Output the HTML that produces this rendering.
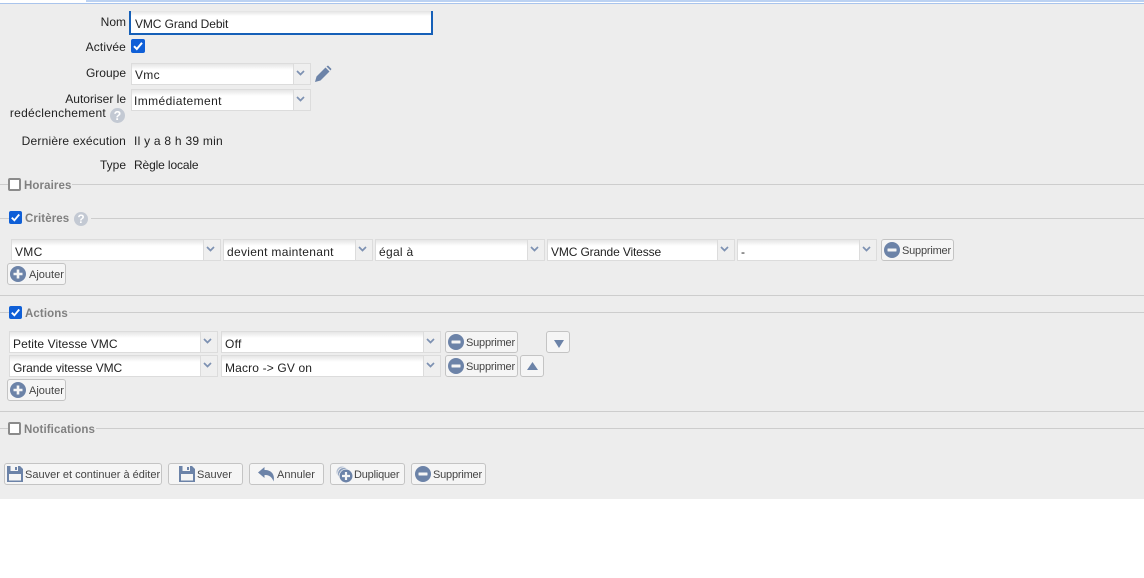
<!DOCTYPE html>
<html><head><meta charset="utf-8"><style>
html,body{margin:0;padding:0;background:#fff}
#p{position:relative;width:1144px;height:578px;overflow:hidden;background:#fff;font:12px "Liberation Sans",sans-serif;color:#222}
#bg{position:absolute;left:0;top:4px;width:1144px;height:495px;background:#ededed}
.a,.l,.v,.s,.b,.hr,.cb,.lg{position:absolute}
.l{right:1018px;text-align:right;white-space:nowrap;line-height:14px}
.v{left:134px;white-space:nowrap;letter-spacing:.2px;line-height:14px}
.s{box-sizing:border-box;height:22px;border:1px solid #dcdcdc;background:linear-gradient(#e6e6e6,#fff 6px);line-height:22px;padding-left:3px;white-space:nowrap;letter-spacing:.3px;color:#222}
.d{padding-top:1px}
.s:after{content:"";position:absolute;right:0;top:0;width:16px;height:20px;background:#efefef;border-left:1px solid #dcdcdc}
.s svg{position:absolute;right:4px;top:4px;z-index:1}
.b{box-sizing:border-box;height:22px;border:1px solid #c4c4c4;border-radius:3px;background:#f5f5f5;font-size:11px;line-height:22px;color:#444;white-space:nowrap}
.b svg{position:absolute;left:2px;top:2px}
.b span{position:absolute;top:0}
.n{letter-spacing:-.2px}
.hr{height:1px;background:#cdcdcd}
.cb{box-sizing:border-box;width:13px;height:13px;border-radius:2px}
.on{background:#0f5fd7}
.on svg{position:absolute;left:0;top:0}
.off{border:2px solid #8b8b8b;background:#fff}
.lg{font-weight:bold;font-size:11.5px;color:#808080;line-height:14px;letter-spacing:.1px;white-space:nowrap}
</style></head><body><div id="p">
<svg width="0" height="0" style="position:absolute"><defs>
<symbol id="ar" viewBox="0 0 11 10"><path d="M2 3L5.5 6.5L9 3" fill="none" stroke="#7d91b2" stroke-width="1.7"/></symbol>
<symbol id="ck" viewBox="0 0 14 14"><path d="M3 7.2L5.8 10L11 3.8" fill="none" stroke="#fff" stroke-width="2"/></symbol>
<symbol id="mi" viewBox="0 0 16 16"><circle cx="8" cy="8" r="8" fill="#6c83a8"/><rect x="3.5" y="6.5" width="9" height="3" rx=".5" fill="#f5f5f5"/></symbol>
<symbol id="pl" viewBox="0 0 16 16"><circle cx="8" cy="8" r="8" fill="#6c83a8"/><path d="M8 3.5v9M3.5 8h9" stroke="#f5f5f5" stroke-width="2.6"/></symbol>
<symbol id="sv" viewBox="0 0 16 16"><path d="M0 0h13l3 3v13H0z" fill="#6c83a8"/><rect x="3.5" y="0" width="7.5" height="5" fill="#f5f5f5"/><rect x="8" y="1" width="2" height="3" fill="#6c83a8"/><rect x="2" y="8" width="12" height="6.5" fill="#f5f5f5"/></symbol>
<symbol id="he" viewBox="0 0 15 15"><circle cx="7.5" cy="7.5" r="7.5" fill="#c3c9d3"/><text x="7.5" y="12" text-anchor="middle" font-family="Liberation Sans" font-weight="bold" font-size="12.5" fill="#fff">?</text></symbol>
</defs></svg>
<div id="bg"></div>
<div class="a" style="left:86px;top:0;width:1058px;height:2px;background:#bcd2f2"></div>
<div class="a" style="left:0;top:3px;width:1144px;height:1px;background:#a9c4ec"></div>

<div class="l" style="top:15px">Nom</div>
<div class="a" style="box-sizing:border-box;left:129px;top:11px;width:304px;height:24px;background:linear-gradient(#e2e2e2,#fff 5px);border:2px solid #1660b8;border-top:0;line-height:24px;padding-left:4px;padding-top:1px;letter-spacing:-.1px">VMC Grand Debit</div>

<div class="l" style="top:40px;letter-spacing:.15px">Activée</div>
<div class="cb on" style="left:131px;top:39px;width:14px;height:14px"><svg width="14" height="14"><use href="#ck"/></svg></div>

<div class="l" style="top:66px">Groupe</div>
<div class="s" style="left:131px;top:63px;width:180px"><svg width="11" height="10"><use href="#ar"/></svg>Vmc</div>
<svg class="a" style="left:314px;top:65px" width="18" height="18" viewBox="0 0 18 18"><path d="M1 17L2.5 11.5L11.5 2.5L15.5 6.5L6.5 15.5Z" fill="#6c83a8"/><path d="M12.5 1.5L14 0.5L17.5 4L16.5 5.5Z" fill="#6c83a8"/></svg>

<div class="l" style="top:92px">Autoriser le</div>
<div class="s" style="left:131px;top:89px;width:180px;padding-left:2px;letter-spacing:.4px"><svg width="11" height="10"><use href="#ar"/></svg>Immédiatement</div>
<div class="l" style="top:106px;right:1038px;letter-spacing:.27px">redéclenchement</div>
<svg class="a" style="left:110px;top:108px" width="15" height="15"><use href="#he"/></svg>

<div class="l" style="top:134px;letter-spacing:.2px">Dernière exécution</div>
<div class="v" style="top:134px;letter-spacing:.25px">Il y a 8 h 39 min</div>
<div class="l" style="top:158px">Type</div>
<div class="v" style="top:158px;letter-spacing:-.13px">Règle locale</div>

<div class="hr" style="left:0;top:184px;width:8px"></div>
<div class="hr" style="left:72px;top:184px;width:1072px"></div>
<div class="cb off" style="left:8px;top:178px"></div>
<div class="lg" style="left:24px;top:179px">Horaires</div>

<div class="hr" style="left:0;top:218px;width:9px"></div>
<div class="hr" style="left:91px;top:218px;width:1053px"></div>
<div class="cb on" style="left:9px;top:211px"><svg width="13" height="13"><use href="#ck"/></svg></div>
<div class="lg" style="left:25px;top:212px">Critères</div>
<svg class="a" style="left:74px;top:212px" width="14" height="14"><use href="#he"/></svg>

<div class="s d" style="left:11px;top:239px;width:210px"><svg width="11" height="10"><use href="#ar"/></svg>VMC</div>
<div class="s d" style="left:223px;top:239px;width:150px"><svg width="11" height="10"><use href="#ar"/></svg>devient maintenant</div>
<div class="s d" style="left:375px;top:239px;width:170px"><svg width="11" height="10"><use href="#ar"/></svg>égal à</div>
<div class="s d" style="left:547px;top:239px;width:188px;letter-spacing:-.14px"><svg width="11" height="10"><use href="#ar"/></svg>VMC Grande Vitesse</div>
<div class="s d" style="left:737px;top:239px;width:140px"><svg width="11" height="10"><use href="#ar"/></svg>-</div>
<div class="b" style="left:881px;top:239px;width:73px"><svg width="16" height="16"><use href="#mi"/></svg><span class="n" style="left:20px">Supprimer</span></div>
<div class="b" style="left:7px;top:263px;width:59px"><svg width="16" height="16"><use href="#pl"/></svg><span style="left:21px">Ajouter</span></div>

<div class="hr" style="left:0;top:295px;width:1144px"></div>
<div class="hr" style="left:0;top:312px;width:9px"></div>
<div class="hr" style="left:69px;top:312px;width:1075px"></div>
<div class="cb on" style="left:9px;top:306px"><svg width="13" height="13"><use href="#ck"/></svg></div>
<div class="lg" style="left:25px;top:307px">Actions</div>

<div class="s d" style="left:9px;top:331px;width:209px;letter-spacing:.08px"><svg width="11" height="10"><use href="#ar"/></svg>Petite Vitesse VMC</div>
<div class="s d" style="left:221px;top:331px;width:220px"><svg width="11" height="10"><use href="#ar"/></svg>Off</div>
<div class="b" style="left:445px;top:331px;width:73px"><svg width="16" height="16"><use href="#mi"/></svg><span class="n" style="left:20px">Supprimer</span></div>
<div class="b" style="left:546px;top:331px;width:24px"><svg style="left:7px;top:8px" width="10" height="8"><path d="M0 0h10L5 8z" fill="#6c83a8"/></svg></div>
<div class="s d" style="left:9px;top:355px;width:209px;letter-spacing:-.09px"><svg width="11" height="10"><use href="#ar"/></svg>Grande vitesse VMC</div>
<div class="s d" style="left:221px;top:355px;width:220px;letter-spacing:.15px"><svg width="11" height="10"><use href="#ar"/></svg>Macro -&gt; GV on</div>
<div class="b" style="left:445px;top:355px;width:73px"><svg width="16" height="16"><use href="#mi"/></svg><span class="n" style="left:20px">Supprimer</span></div>
<div class="b" style="left:520px;top:355px;width:24px"><svg style="left:6px;top:6px" width="11" height="8"><path d="M0 8h11L5.5 0z" fill="#6c83a8"/></svg></div>
<div class="b" style="left:7px;top:379px;width:59px"><svg width="16" height="16"><use href="#pl"/></svg><span style="left:21px">Ajouter</span></div>

<div class="hr" style="left:0;top:411px;width:1144px"></div>
<div class="hr" style="left:0;top:428px;width:8px"></div>
<div class="hr" style="left:96px;top:428px;width:1048px"></div>
<div class="cb off" style="left:8px;top:422px"></div>
<div class="lg" style="left:24px;top:423px">Notifications</div>

<div class="b" style="left:4px;top:463px;width:158px"><svg style="left:2px;top:2px" width="16" height="16"><use href="#sv"/></svg><span style="left:20px">Sauver et continuer à éditer</span></div>
<div class="b" style="left:168px;top:463px;width:75px"><svg style="left:10px;top:2px" width="16" height="16"><use href="#sv"/></svg><span style="left:28px">Sauver</span></div>
<div class="b" style="left:249px;top:463px;width:75px"><svg style="left:8px;top:3px" width="17" height="15" viewBox="0 0 17 15"><path d="M0 5.5L6.5 0V3C12.5 2.5 17.5 7 15.5 14.5C14.5 10.5 11 7.5 6.5 8V11Z" fill="#6c83a8"/></svg><span style="left:27px">Annuler</span></div>
<div class="b" style="left:330px;top:463px;width:75px"><svg style="left:5px;top:2px" width="17" height="17" viewBox="0 0 17 17"><circle cx="6" cy="6" r="5.5" fill="#b3bfd2"/><circle cx="7.5" cy="7.5" r="5.8" fill="#8a9dbb" stroke="#f5f5f5" stroke-width=".7"/><circle cx="10" cy="10" r="6.8" fill="#6c83a8" stroke="#f5f5f5" stroke-width=".7"/><path d="M10 6v8M6 10h8" stroke="#f5f5f5" stroke-width="2.2"/></svg><span class="n" style="left:23px">Dupliquer</span></div>
<div class="b" style="left:411px;top:463px;width:75px"><svg style="left:3px" width="16" height="16"><use href="#mi"/></svg><span class="n" style="left:21px">Supprimer</span></div>
</div></body></html>
